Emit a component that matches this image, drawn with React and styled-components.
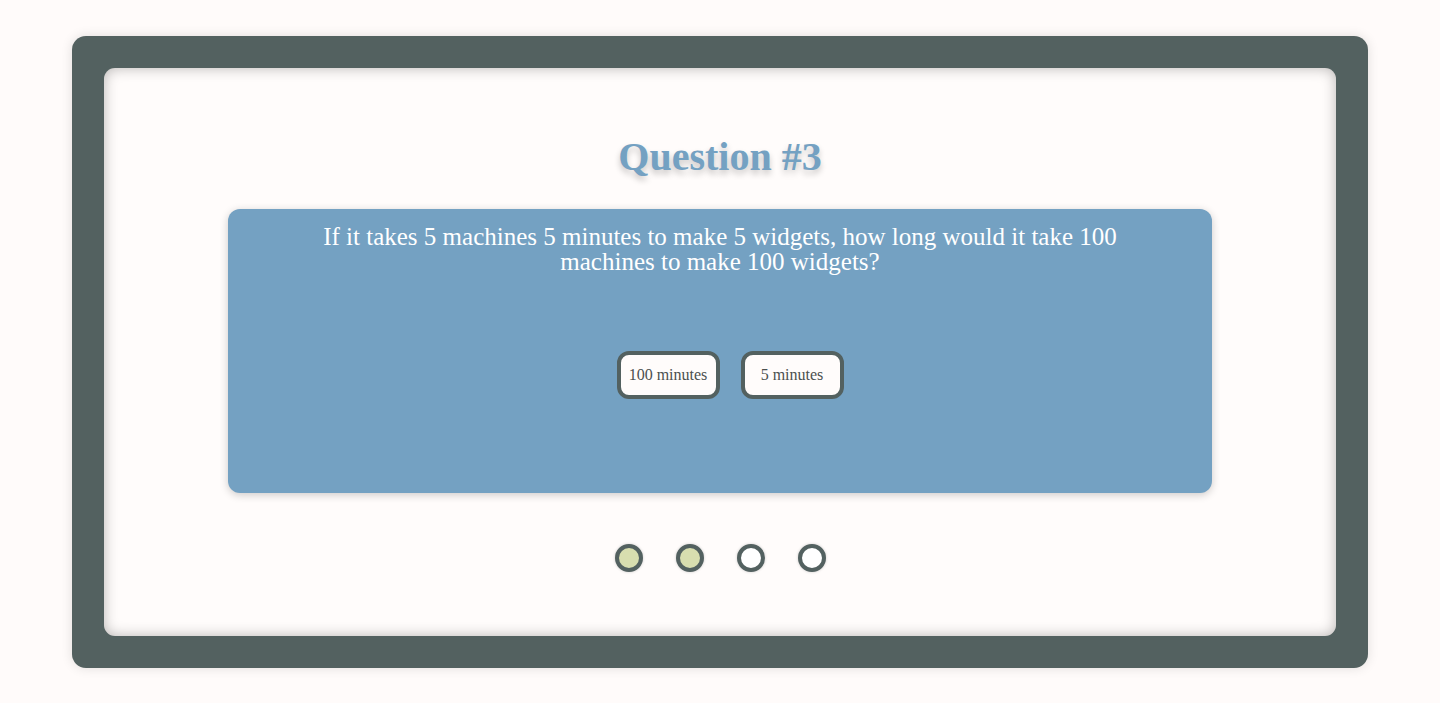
import React from 'react'
import styled, { createGlobalStyle } from 'styled-components'

const GlobalStyle = createGlobalStyle`
  html, body {
    margin: 0;
    padding: 0;
    background-color: #fffbfa;
    font-family: "Liberation Serif", "Times New Roman", serif;
  }
`

const Page = styled.div`
  height: 703px;
  display: flex;
  align-items: center;
  justify-content: center;
`

const Frame = styled.div`
  width: 1296px;
  height: 632px;
  box-sizing: border-box;
  padding: 32px;
  background-color: #536160;
  border-radius: 14px;
  box-shadow: 0 0 12px rgba(0, 0, 0, 0.12);
`

const Panel = styled.div`
  height: 100%;
  box-sizing: border-box;
  padding-top: 66px;
  background-color: #fffcfb;
  border-radius: 11px;
  box-shadow: inset 0 0 14px rgba(0, 0, 0, 0.28);
  display: flex;
  flex-direction: column;
  align-items: center;
`

const Title = styled.h1`
  margin: 0;
  font-size: 40px;
  line-height: 46px;
  font-weight: bold;
  color: #74a1c2;
  text-shadow: 0 4px 6px rgba(0, 0, 0, 0.22);
`

const Card = styled.div`
  margin-top: 29px;
  width: 984px;
  height: 284px;
  box-sizing: border-box;
  padding-top: 15px;
  background-color: #74a1c2;
  border-radius: 12px;
  box-shadow: 0 2px 8px rgba(0, 0, 0, 0.2);
  display: flex;
  flex-direction: column;
  align-items: center;
`

const Question = styled.p`
  margin: 0;
  width: 830px;
  text-align: center;
  color: #ffffff;
  font-size: 25px;
  line-height: 25px;
`

const Answers = styled.div`
  margin-top: 77px;
  padding-left: 20px;
  display: flex;
  gap: 21px;
`

const Answer = styled.button`
  width: 103px;
  height: 48px;
  padding: 0;
  box-sizing: border-box;
  border: 4px solid #536160;
  border-radius: 12px;
  background-color: #fffcfb;
  color: #4b504f;
  font-family: "Liberation Serif", "Times New Roman", serif;
  font-size: 16px;
  cursor: pointer;
`

const Dots = styled.div`
  margin-top: 51px;
  display: flex;
  gap: 33px;
`

const Dot = styled.span`
  width: 28px;
  height: 28px;
  box-sizing: border-box;
  border: 4px solid #536160;
  border-radius: 50%;
  background-color: ${(p) => (p.done ? '#d8deaf' : '#ffffff')};
  box-shadow: 0 0 3px rgba(0, 0, 0, 0.2);
`

const App = () => {
  return (
    <>
      <GlobalStyle />
      <Page>
        <Frame>
          <Panel>
            <Title>Question #3</Title>
            <Card>
              <Question>
                If it takes 5 machines 5 minutes to make 5 widgets, how long would it take 100 machines to make 100 widgets?
              </Question>
              <Answers>
                <Answer>100 minutes</Answer>
                <Answer>5 minutes</Answer>
              </Answers>
            </Card>
            <Dots>
              <Dot done />
              <Dot done />
              <Dot />
              <Dot />
            </Dots>
          </Panel>
        </Frame>
      </Page>
    </>
  )
}

export default App
